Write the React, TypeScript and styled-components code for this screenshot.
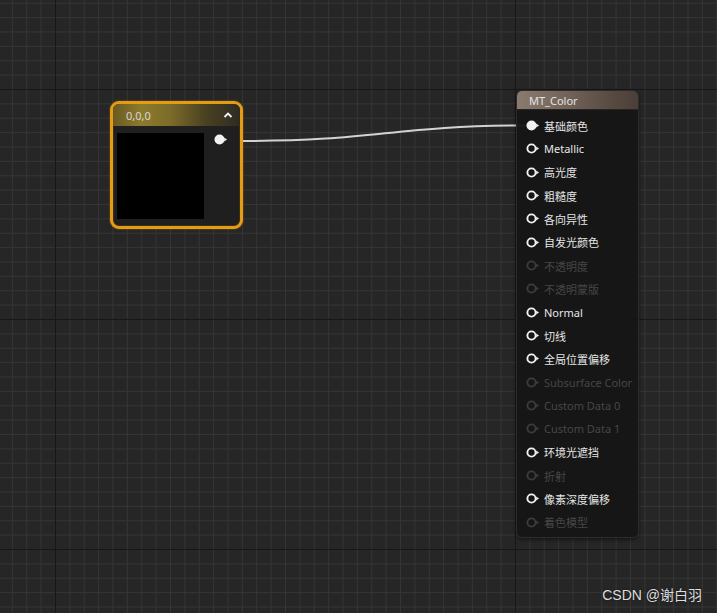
import React from "react";
import styled, { createGlobalStyle } from "styled-components";

const Global = createGlobalStyle`
  html, body { margin: 0; padding: 0; background: #262626; }
  body { font-family: "Noto Sans", "Noto Sans CJK SC", sans-serif; }
`;

const Canvas = styled.div`
  position: relative;
  width: 717px;
  height: 613px;
  overflow: hidden;
  background-color: #262626;
  background-image:
    linear-gradient(to right, #171717 1px, transparent 1px),
    linear-gradient(to bottom, #171717 1px, transparent 1px),
    linear-gradient(to right, #353535 1px, transparent 1px),
    linear-gradient(to bottom, #353535 1px, transparent 1px);
  background-size: 460px 100%, 100% 230px, 14.375px 100%, 100% 14.375px;
  background-position: 55px 0, 0 89px, 11.875px 0, 0 2.75px;
`;

const Wires = styled.svg`
  position: absolute;
  inset: 0;
  pointer-events: none;
`;

const ConstNode = styled.div<{ $x: number; $y: number }>`
  position: absolute;
  left: ${(p) => p.$x}px;
  top: ${(p) => p.$y}px;
  width: 127px;
  height: 122px;
  border: 3px solid #e49c16;
  border-radius: 9px;
  background: #1f1f1f;
  box-shadow: 0 0 2px rgba(255, 170, 30, 0.5), inset 0 0 0 1px #3a2e12;
  display: flex;
  flex-direction: column;
  overflow: hidden;
`;

const ConstHeader = styled.div`
  height: 22px;
  display: flex;
  align-items: center;
  justify-content: space-between;
  padding: 0 7px 0 13px;
  background: linear-gradient(
    90deg,
    #6a5a22 0%,
    #8c7a2c 22%,
    #7d6c28 45%,
    #4b4222 72%,
    #2e2b22 100%
  );
  color: #d6d6d6;
  font-size: 11px;
`;

const ConstBody = styled.div`
  flex: 1;
  display: flex;
  padding: 7px 0 6px 4px;
  gap: 10px;
`;

const Preview = styled.div`
  width: 87px;
  height: 86px;
  background: #000;
`;

const OutCol = styled.div`
  display: flex;
  flex-direction: column;
  padding-top: 1px;
`;

const MatNode = styled.div<{ $x: number; $y: number }>`
  position: absolute;
  left: ${(p) => p.$x}px;
  top: ${(p) => p.$y}px;
  width: 121px;
  height: 446px;
  border-radius: 5px;
  background: rgba(22, 22, 22, 0.97);
  box-shadow: 0 0 0 1px #2c2c2c, 0 2px 5px rgba(0, 0, 0, 0.6);
  display: flex;
  flex-direction: column;
  overflow: hidden;
`;

const MatHeader = styled.div`
  height: 18px;
  display: flex;
  align-items: center;
  padding-left: 12px;
  background: linear-gradient(90deg, #8a7b6f 0%, #6f6157 45%, #56493f 80%, #4a3f39 100%);
  color: #e4e4e4;
  font-size: 11px;
  border-bottom: 1px solid #2a2420;
`;

const PinList = styled.div`
  display: flex;
  flex-direction: column;
  padding-top: 4px;
`;

const PinRow = styled.div<{ $off?: boolean }>`
  height: 23.33px;
  display: flex;
  align-items: center;
  gap: 3px;
  padding-left: 9px;
  font-size: 11px;
  white-space: nowrap;
  color: ${(p) => (p.$off ? "#464646" : "#e6e6e6")};
`;

const Watermark = styled.div`
  position: absolute;
  right: 15px;
  bottom: 9px;
  font-family: "Liberation Sans", "Noto Sans CJK SC", sans-serif;
  font-size: 14px;
  color: #dedede;
  text-shadow: 0 0 2px rgba(0, 0, 0, 0.6);
`;

const Pin: React.FC<{ filled?: boolean; off?: boolean }> = ({ filled, off }) => {
  const c = off ? "#3c3c3c" : "#f2f2f2";
  return (
    <svg width="15" height="11" viewBox="0 0 15 11">
      {filled ? (
        <circle cx="5.5" cy="5.5" r="5" fill={c} />
      ) : (
        <circle cx="5.5" cy="5.5" r="4.1" fill="none" stroke={c} strokeWidth="1.9" />
      )}
      <polygon points="10.2,3.4 13,5.5 10.2,7.6" fill={c} />
    </svg>
  );
};

const Caret = () => (
  <svg width="10" height="8" viewBox="0 0 10 8">
    <path d="M1.5 6 L5 2.5 L8.5 6" fill="none" stroke="#f0f0f0" strokeWidth="1.8" />
  </svg>
);

const inputs: { label: string; off?: boolean; filled?: boolean }[] = [
  { label: "基础颜色", filled: true },
  { label: "Metallic" },
  { label: "高光度" },
  { label: "粗糙度" },
  { label: "各向异性" },
  { label: "自发光颜色" },
  { label: "不透明度", off: true },
  { label: "不透明蒙版", off: true },
  { label: "Normal" },
  { label: "切线" },
  { label: "全局位置偏移" },
  { label: "Subsurface Color", off: true },
  { label: "Custom Data 0", off: true },
  { label: "Custom Data 1", off: true },
  { label: "环境光遮挡" },
  { label: "折射", off: true },
  { label: "像素深度偏移" },
  { label: "着色模型", off: true },
];

export default function App() {
  return (
    <>
      <Global />
      <Canvas>
        <Wires width="717" height="613">
          <path
            d="M 241 141 C 380 141, 390 125.5, 528 125.5"
            fill="none"
            stroke="#d2d2d2"
            strokeWidth="2"
          />
        </Wires>
        <ConstNode $x={110} $y={101}>
          <ConstHeader>
            <span>0,0,0</span>
            <Caret />
          </ConstHeader>
          <ConstBody>
            <Preview />
            <OutCol>
              <Pin filled />
            </OutCol>
          </ConstBody>
        </ConstNode>
        <MatNode $x={517} $y={91}>
          <MatHeader>MT_Color</MatHeader>
          <PinList>
            {inputs.map((i) => (
              <PinRow key={i.label} $off={i.off}>
                <Pin filled={i.filled} off={i.off} />
                <span>{i.label}</span>
              </PinRow>
            ))}
          </PinList>
        </MatNode>
        <Watermark>CSDN @谢白羽</Watermark>
      </Canvas>
    </>
  );
}
